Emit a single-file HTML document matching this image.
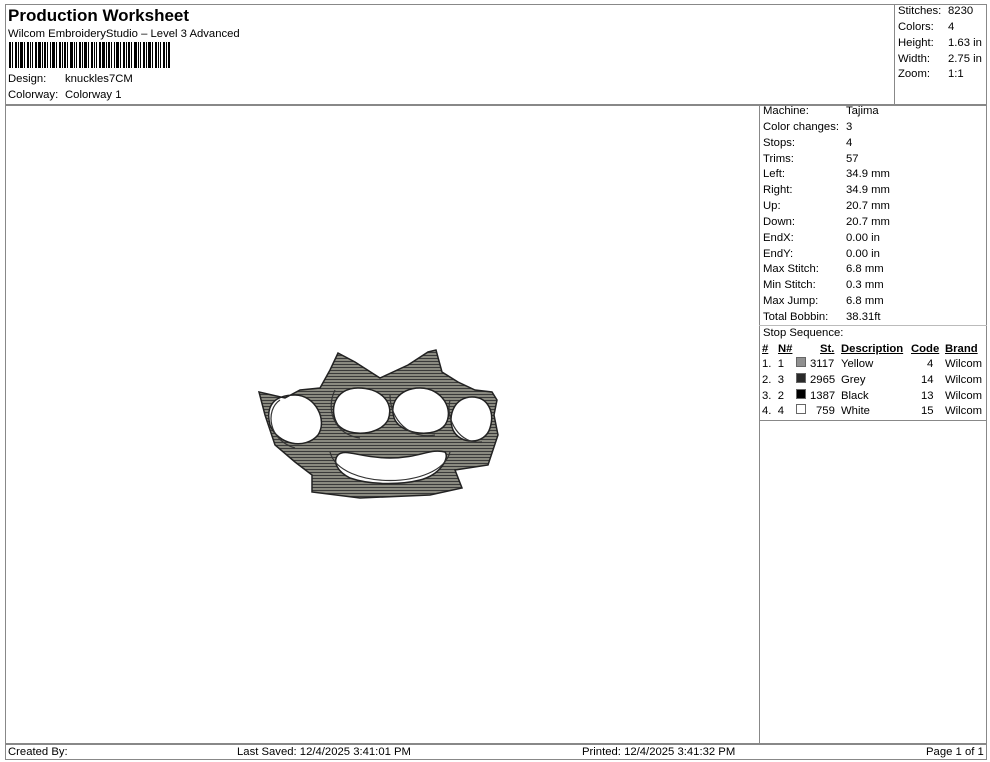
<!DOCTYPE html>
<html><head><meta charset="utf-8"><style>
*{margin:0;padding:0;box-sizing:border-box}
body{width:990px;height:762px;background:#fff;font-family:"Liberation Sans",Arial,sans-serif;font-size:11.3px;color:#000;position:relative;overflow:hidden}
.a{position:absolute;white-space:nowrap;line-height:13px}
.b{position:absolute;background:#888}
.sw{display:inline-block;width:10px;height:10px;border:1px solid #666;vertical-align:-1px}
</style></head><body>
<div class="b" style="left:5px;top:4px;width:982px;height:1px"></div>
<div class="b" style="left:5px;top:4px;width:1px;height:756px"></div>
<div class="b" style="left:986px;top:4px;width:1px;height:756px"></div>
<div class="b" style="left:5px;top:104px;width:982px;height:2px"></div>
<div class="b" style="left:894px;top:4px;width:1px;height:100px"></div>
<div class="b" style="left:759px;top:104px;width:1px;height:640px"></div>
<div class="b" style="left:759px;top:325px;width:228px;height:1px;background:#bbb"></div>
<div class="b" style="left:759px;top:420px;width:228px;height:1px"></div>
<div class="b" style="left:5px;top:743px;width:982px;height:2px"></div>
<div class="b" style="left:5px;top:759px;width:982px;height:1px"></div>

<div class="a" style="left:8px;top:7px;font-size:17px;font-weight:bold;line-height:18px">Production Worksheet</div>
<div class="a" style="left:8px;top:28px">Wilcom EmbroideryStudio – Level 3 Advanced</div>
<svg style="position:absolute;left:9px;top:42px" width="162" height="26">
<g fill="#000">
<rect x="0" width="2" height="26"/><rect x="3" width="1" height="26"/><rect x="6" width="2" height="26"/><rect x="9" width="1" height="26"/><rect x="11" width="3" height="26"/><rect x="15" width="1" height="26"/><rect x="18" width="2" height="26"/><rect x="21" width="1" height="26"/><rect x="23" width="1" height="26"/><rect x="26" width="2" height="26"/><rect x="29" width="3" height="26"/><rect x="33" width="1" height="26"/><rect x="35" width="2" height="26"/><rect x="38" width="1" height="26"/><rect x="41" width="1" height="26"/><rect x="43" width="3" height="26"/><rect x="47" width="1" height="26"/><rect x="50" width="2" height="26"/><rect x="53" width="1" height="26"/><rect x="55" width="2" height="26"/><rect x="58" width="1" height="26"/><rect x="61" width="3" height="26"/><rect x="65" width="1" height="26"/><rect x="67" width="1" height="26"/><rect x="70" width="2" height="26"/><rect x="73" width="1" height="26"/><rect x="75" width="3" height="26"/><rect x="79" width="1" height="26"/><rect x="82" width="2" height="26"/><rect x="85" width="1" height="26"/><rect x="87" width="1" height="26"/><rect x="90" width="2" height="26"/><rect x="93" width="3" height="26"/><rect x="97" width="1" height="26"/><rect x="99" width="2" height="26"/><rect x="102" width="1" height="26"/><rect x="105" width="1" height="26"/><rect x="107" width="3" height="26"/><rect x="111" width="1" height="26"/><rect x="114" width="2" height="26"/><rect x="117" width="1" height="26"/><rect x="119" width="2" height="26"/><rect x="122" width="1" height="26"/><rect x="125" width="3" height="26"/><rect x="129" width="1" height="26"/><rect x="131" width="1" height="26"/><rect x="134" width="2" height="26"/><rect x="137" width="1" height="26"/><rect x="139" width="3" height="26"/><rect x="143" width="1" height="26"/><rect x="146" width="2" height="26"/><rect x="149" width="1" height="26"/><rect x="151" width="1" height="26"/><rect x="154" width="2" height="26"/><rect x="157" width="1" height="26"/><rect x="159" width="2" height="26"/>
</g></svg>
<div class="a" style="left:8px;top:73px">Design:</div><div class="a" style="left:65px;top:73px">knuckles7CM</div>
<div class="a" style="left:8px;top:89px">Colorway:</div><div class="a" style="left:65px;top:89px">Colorway 1</div>

<div class="a" style="left:898px;top:5px">Stitches:</div><div class="a" style="left:948px;top:5px">8230</div>
<div class="a" style="left:898px;top:21px">Colors:</div><div class="a" style="left:948px;top:21px">4</div>
<div class="a" style="left:898px;top:37px">Height:</div><div class="a" style="left:948px;top:37px">1.63 in</div>
<div class="a" style="left:898px;top:53px">Width:</div><div class="a" style="left:948px;top:53px">2.75 in</div>
<div class="a" style="left:898px;top:68px">Zoom:</div><div class="a" style="left:948px;top:68px">1:1</div>

<div style="position:absolute;left:763px;top:104px;line-height:15.85px">
Machine:<br>Color changes:<br>Stops:<br>Trims:<br>Left:<br>Right:<br>Up:<br>Down:<br>EndX:<br>EndY:<br>Max Stitch:<br>Min Stitch:<br>Max Jump:<br>Total Bobbin:<br>Stop Sequence:</div>
<div style="position:absolute;left:846px;top:104px;line-height:15.85px">
Tajima<br>3<br>4<br>57<br>34.9 mm<br>34.9 mm<br>20.7 mm<br>20.7 mm<br>0.00 in<br>0.00 in<br>6.8 mm<br>0.3 mm<br>6.8 mm<br>38.31ft</div>

<div class="a" style="left:762px;top:343px;font-weight:bold;text-decoration:underline">#</div>
<div class="a" style="left:778px;top:343px;font-weight:bold;text-decoration:underline">N#</div>
<div class="a" style="left:820px;top:343px;font-weight:bold;text-decoration:underline">St.</div>
<div class="a" style="left:841px;top:343px;font-weight:bold;text-decoration:underline">Description</div>
<div class="a" style="left:911px;top:343px;font-weight:bold;text-decoration:underline">Code</div>
<div class="a" style="left:945px;top:343px;font-weight:bold;text-decoration:underline">Brand</div>

<div class="a" style="left:762px;top:358px">1.&nbsp;&nbsp;1</div><div class="a" style="left:796px;top:357px"><span class="sw" style="background:#909090"></span></div><div class="a" style="left:810px;top:358px">3117</div><div class="a" style="left:841px;top:358px">Yellow</div><div class="a" style="left:927px;top:358px">4</div><div class="a" style="left:945px;top:358px">Wilcom</div>
<div class="a" style="left:762px;top:374px">2.&nbsp;&nbsp;3</div><div class="a" style="left:796px;top:373px"><span class="sw" style="background:#2a2a2a"></span></div><div class="a" style="left:810px;top:374px">2965</div><div class="a" style="left:841px;top:374px">Grey</div><div class="a" style="left:921px;top:374px">14</div><div class="a" style="left:945px;top:374px">Wilcom</div>
<div class="a" style="left:762px;top:390px">3.&nbsp;&nbsp;2</div><div class="a" style="left:796px;top:389px"><span class="sw" style="background:#000"></span></div><div class="a" style="left:810px;top:390px">1387</div><div class="a" style="left:841px;top:390px">Black</div><div class="a" style="left:921px;top:390px">13</div><div class="a" style="left:945px;top:390px">Wilcom</div>
<div class="a" style="left:762px;top:405px">4.&nbsp;&nbsp;4</div><div class="a" style="left:796px;top:404px"><span class="sw" style="background:#fff"></span></div><div class="a" style="left:816px;top:405px">759</div><div class="a" style="left:841px;top:405px">White</div><div class="a" style="left:921px;top:405px">15</div><div class="a" style="left:945px;top:405px">Wilcom</div>

<svg style="position:absolute;left:250px;top:340px" width="260" height="170">
<defs><pattern id="h" width="4" height="3" patternUnits="userSpaceOnUse"><rect width="4" height="3" fill="#8a8a80"/><rect width="4" height="1" fill="#3a3a3a"/></pattern></defs>
<path fill-rule="evenodd" fill="url(#h)" stroke="#222" stroke-width="1.5" d="M9,52 L35,58 L50,50 L70,48 L80,30 L88,13 L105,22 L130,38 L158,25 L178,12 L186,10 L192,32 L208,42 L225,50 L242,52 L247,60 L244,75 L248,95 L238,125 L205,130 L212,148 L180,155 L110,158 L62,152 L62,135 L45,122 L25,105 L15,75 Z
M45,55 C25,55 15,65 20,85 C28,105 55,110 68,95 C78,80 65,55 45,55 Z
M108,48 C85,48 78,70 88,85 C100,98 130,95 138,80 C145,62 130,48 108,48 Z
M170,48 C148,48 138,65 145,80 C153,95 185,98 195,85 C205,70 192,48 170,48 Z
M222,57 C205,57 197,75 203,90 C210,105 235,105 240,88 C245,72 238,57 222,57 Z
M88,115 C95,108 110,118 140,118 C170,118 180,108 195,112 C200,118 190,135 170,140 C150,145 120,145 100,138 C88,132 82,122 88,115 Z"/>
<g fill="none" stroke="#333" stroke-width="1.2">
<path d="M30,60 C15,70 18,100 45,108 M85,50 C75,70 85,95 110,98 M140,55 C140,80 160,100 185,95 M200,60 C195,80 210,105 232,102 M80,112 C90,150 190,150 200,112"/>
</g>
</svg>

<div class="a" style="left:8px;top:746px">Created By:</div>
<div class="a" style="left:237px;top:746px">Last Saved: 12/4/2025 3:41:01 PM</div>
<div class="a" style="left:582px;top:746px">Printed: 12/4/2025 3:41:32 PM</div>
<div class="a" style="left:926px;top:746px">Page 1 of 1</div>
</body></html>
